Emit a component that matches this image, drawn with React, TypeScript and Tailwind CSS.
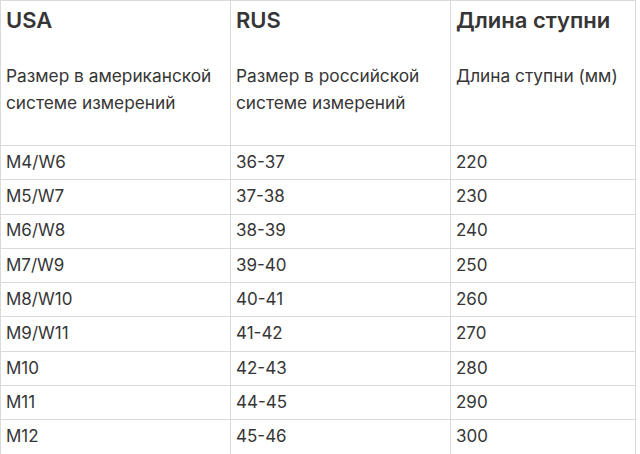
import React from 'react';

const rows = [
  ['M4/W6', '36-37', '220'],
  ['M5/W7', '37-38', '230'],
  ['M6/W8', '38-39', '240'],
  ['M7/W9', '39-40', '250'],
  ['M8/W10', '40-41', '260'],
  ['M9/W11', '41-42', '270'],
  ['M10', '42-43', '280'],
  ['M11', '44-45', '290'],
  ['M12', '45-46', '300'],
];

const headers = [
  { title: 'USA', sub: ['Размер в американской', 'системе измерений'] },
  { title: 'RUS', sub: ['Размер в российской', 'системе измерений'] },
  { title: 'Длина ступни', sub: ['Длина ступни (мм)'] },
];

const cols = 'grid grid-cols-[229px_220px_186px]';

export default function App() {
  return (
    <div className="w-[640px] h-[454px] bg-white text-[#363636] font-['Inter','Noto_Sans',sans-serif] overflow-hidden">
      <div className="w-[636px] border-l border-t border-r border-[#dadada]">
        {/* Header */}
        <div className={`${cols} h-[144px]`}>
          {headers.map((h, i) => (
            <div
              key={h.title}
              className={`px-[5px] pt-[5px] ${i > 0 ? 'border-l border-[#dadada]' : ''}`}
            >
              <div className="text-[22px] font-semibold leading-[28px]">{h.title}</div>
              <div className="mt-[28px] text-[17.3px] leading-[27px]">
                {h.sub.map((s) => (
                  <div key={s}>{s}</div>
                ))}
              </div>
            </div>
          ))}
        </div>

        {/* Rows */}
        {rows.map((r) => (
          <div key={r[0]} className={`${cols} h-[34.3px] border-t border-[#dadada]`}>
            {r.map((c, i) => (
              <div
                key={i}
                className={`flex items-center px-[5px] text-[17px] ${i > 0 ? 'border-l border-[#dadada]' : ''}`}
              >
                {c}
              </div>
            ))}
          </div>
        ))}
        <div className="border-t border-[#dadada]" />
      </div>
    </div>
  );
}
